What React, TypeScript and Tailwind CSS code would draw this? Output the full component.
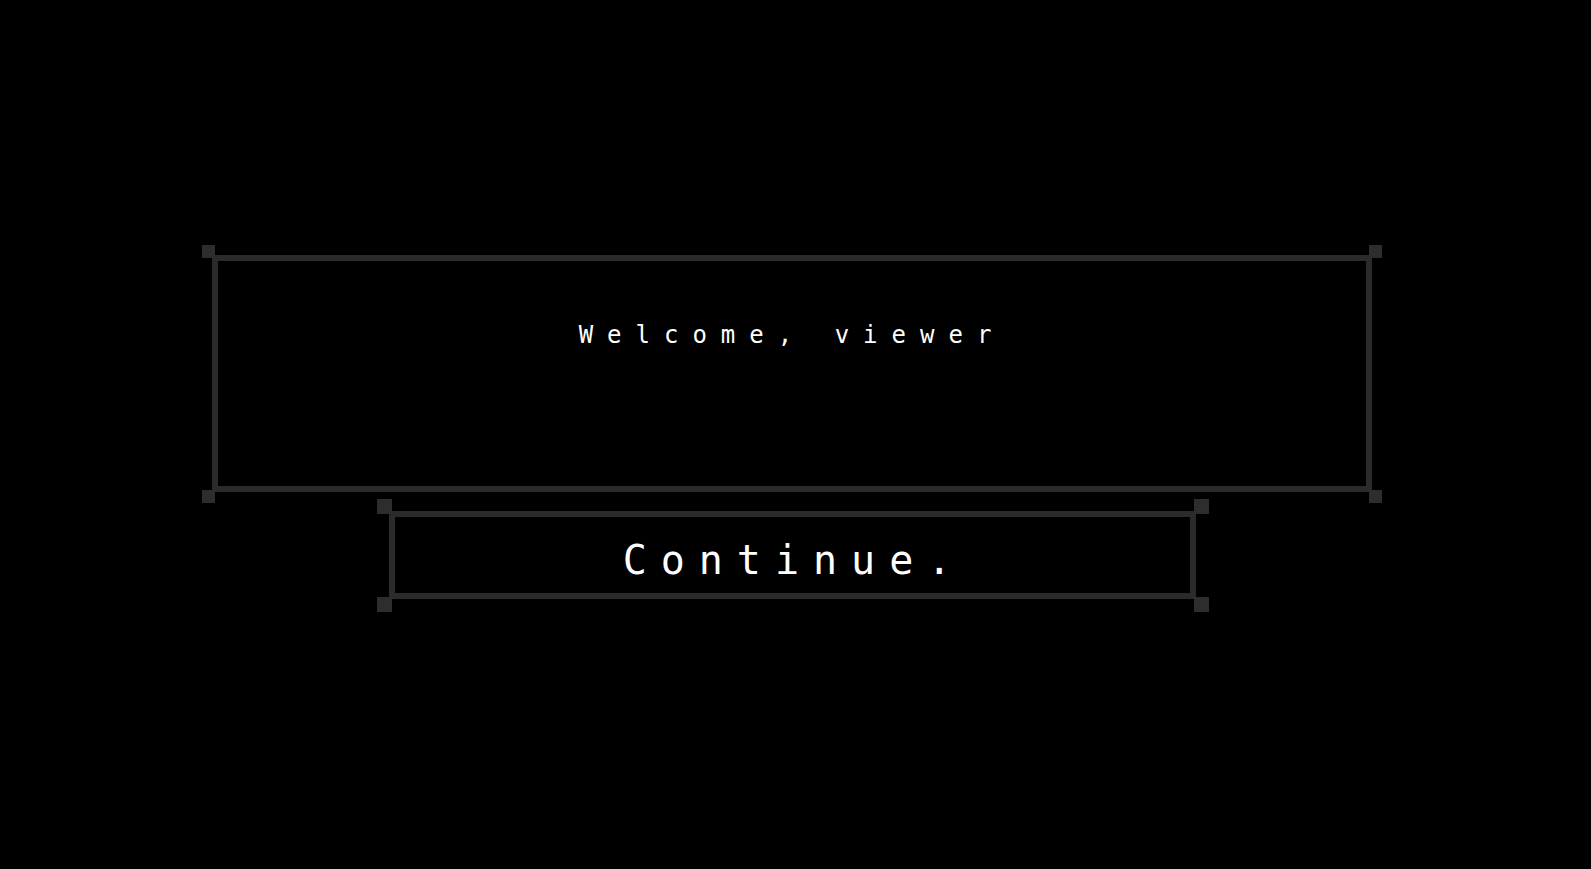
import React from "react";

const mono = { fontFamily: '"DejaVu Sans Mono", "Liberation Mono", monospace' };

// decorative corner studs; offsets measured from the padding box (inside the 6px border)
function Corners({ size }: { size: "lg" | "sm" }) {
  const base =
    size === "sm"
      ? "absolute w-[13px] h-[13px] bg-[#2d2d2d]"
      : "absolute w-[15px] h-[15px] bg-[#2d2d2d]";
  const off =
    size === "sm"
      ? ["-left-[16px] -top-[16px]", "-right-[16px] -top-[16px]", "-left-[16px] -bottom-[17px]", "-right-[16px] -bottom-[17px]"]
      : ["-left-[18px] -top-[18px]", "-right-[19px] -top-[18px]", "-left-[18px] -bottom-[19px]", "-right-[19px] -bottom-[19px]"];
  return (
    <>
      {off.map((o) => (
        <span key={o} className={`${base} ${o}`} />
      ))}
    </>
  );
}

export default function App() {
  return (
    <div className="min-h-screen w-full bg-black flex flex-col items-center pt-[255px] pr-[7px]" style={mono}>
      {/* message box */}
      <div className="relative w-[1160px] h-[237px] border-[6px] border-[#2b2b2b] flex justify-center pt-[62px]">
        <Corners size="sm" />
        <p className="text-white text-[24px] leading-[24px] tracking-[14px]">
          Welcome, viewer
        </p>
      </div>

      {/* continue button */}
      <button className="relative mt-[19px] w-[807px] h-[88px] border-[6px] border-[#2b2b2b] flex justify-center pt-[23px] cursor-pointer">
        <Corners size="lg" />
        <span className="text-white text-[40px] leading-[40px] tracking-[14px] pl-[4px]">
          Continue.
        </span>
      </button>
    </div>
  );
}
